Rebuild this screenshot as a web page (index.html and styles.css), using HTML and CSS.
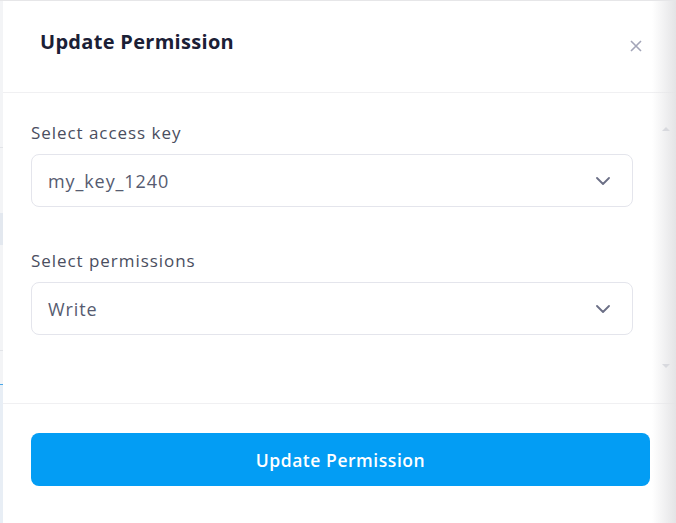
FILE: index.html
```html
<!DOCTYPE html>
<html>
<head>
<meta charset="utf-8">
<link rel="stylesheet" href="styles.css">
</head>
<body>
<div class="page">
  <div class="behind">
    <div class="b-line b1"></div>
    <div class="b-band"></div>
    <div class="b-line b2"></div>
    <div class="b-blue"></div>
  </div>
  <div class="modal">
    <div class="header">
      <h2 class="title">Update Permission</h2>
      <button class="close" aria-label="Close">
        <svg width="12" height="12" viewBox="0 0 12 12"><path d="M1 1L11 11M11 1L1 11" stroke="#a3a5b8" stroke-width="1.6" fill="none"/></svg>
      </button>
    </div>
    <div class="body">
      <div class="field">
        <label class="label">Select access key</label>
        <div class="select">
          <span class="value">my_key_1240</span>
          <svg class="chev" width="14" height="8" viewBox="0 0 14 8"><path d="M1 1L7 7L13 1" stroke="#6b6f86" stroke-width="1.8" fill="none" stroke-linecap="round" stroke-linejoin="round"/></svg>
        </div>
      </div>
      <div class="field">
        <label class="label">Select permissions</label>
        <div class="select">
          <span class="value">Write</span>
          <svg class="chev" width="14" height="8" viewBox="0 0 14 8"><path d="M1 1L7 7L13 1" stroke="#6b6f86" stroke-width="1.8" fill="none" stroke-linecap="round" stroke-linejoin="round"/></svg>
        </div>
      </div>
    </div>
    <div class="footer">
      <button class="primary">Update Permission</button>
    </div>
  </div>
  <div class="edge-shade">
    <span class="arrow up"></span>
    <span class="arrow down"></span>
  </div>
</div>
</body>
</html>
```

FILE: styles.css
```css
* { box-sizing: border-box; }
html, body { margin: 0; padding: 0; background: #fff; overflow: hidden; }
body { font-family: "Open Sans", "DejaVu Sans", sans-serif; }

.page {
  position: relative;
  display: flex;
  width: 676px;
  height: 523px;
  border-top: 1px solid #e6e6e8;
}

.behind {
  position: relative;
  width: 3px;
  flex: none;
  background: #f3f4f6;
}
.b-line { position: absolute; left: 0; width: 3px; height: 1px; background: #e2e4e8; }
.b1 { top: 146px; }
.b2 { top: 349px; }
.b-band { position: absolute; left: 0; top: 212px; width: 3px; height: 32px; background: #e3e8ef; }
.b-blue { position: absolute; left: 0; top: 383px; width: 3px; height: 140px; background: #e8eef5; border-top: 1px solid #4aa8e8; }

.modal {
  flex: 1;
  display: flex;
  flex-direction: column;
  background: #fff;
}

.header {
  height: 92px;
  display: flex;
  align-items: flex-start;
  justify-content: space-between;
  padding: 0 34px 0 37px;
  border-bottom: 1px solid #f0f0f2;
}
.title {
  margin: 28px 0 0;
  font-size: 20px;
  line-height: 26px;
  letter-spacing: 0.3px;
  font-weight: 700;
  color: #1b2036;
}
.close {
  margin-top: 39px;
  border: 0;
  background: none;
  padding: 0;
  width: 12px;
  height: 12px;
  display: flex;
}

.body {
  padding: 28px 0 68px 28px;
  display: flex;
  flex-direction: column;
  gap: 42px;
  border-bottom: 1px solid #f0f0f2;
}
.field { display: flex; flex-direction: column; gap: 9px; }
.label {
  font-size: 17px;
  line-height: 24px;
  letter-spacing: 0.95px;
  color: #4a4e60;
}
.select {
  width: 602px;
  height: 53px;
  border: 1px solid #e4e5ec;
  border-radius: 8px;
  display: flex;
  align-items: center;
  justify-content: space-between;
  padding: 0 22px 0 16px;
}
.value { font-size: 18px; letter-spacing: 0.9px; color: #565b70; }
.chev { display: block; }

.footer { padding: 29px 0 0 28px; }
.primary {
  width: 619px;
  height: 53px;
  border: 0;
  border-radius: 8px;
  background: #039df4;
  color: #fff;
  font-family: inherit;
  font-size: 17.5px;
  letter-spacing: 0.55px;
  font-weight: 600;
}

.edge-shade {
  position: absolute;
  top: 0;
  right: 0;
  width: 24px;
  height: 523px;
  background: linear-gradient(to right, rgba(232,232,234,0), rgba(228,228,230,1));
  pointer-events: none;
}
.arrow {
  position: absolute;
  left: 10px;
  width: 0; height: 0;
  border-left: 4px solid transparent;
  border-right: 4px solid transparent;
}
.arrow.up { top: 126px; border-bottom: 4px solid #d8d9de; }
.arrow.down { top: 363px; border-top: 4px solid #d8d9de; }
```
